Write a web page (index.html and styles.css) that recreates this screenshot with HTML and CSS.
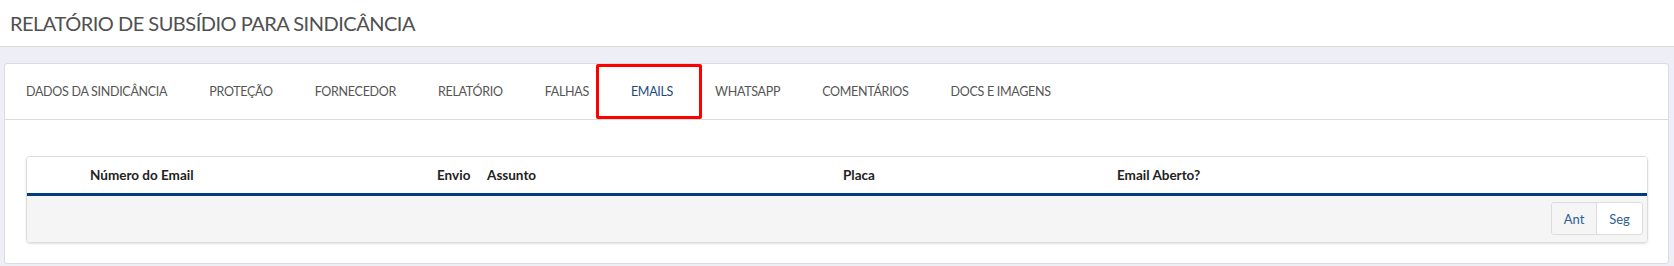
FILE: index.html
```html
<!DOCTYPE html>
<html>
  <head>
    <meta charset="utf-8" />
    <title>Relatório de Subsídio para Sindicância</title>
    <link rel="stylesheet" href="styles.css">
  </head>
  <body>
    <div class="page-header">
      <h1 class="page-title">RELATÓRIO DE SUBSÍDIO PARA SINDICÂNCIA</h1>
    </div>
    <div class="page-body">
      <div class="panel">
        <ul class="tabs">
          <li class="tab">DADOS DA SINDICÂNCIA</li>
          <li class="tab">PROTEÇÃO</li>
          <li class="tab">FORNECEDOR</li>
          <li class="tab">RELATÓRIO</li>
          <li class="tab">FALHAS</li>
          <li class="tab active">EMAILS</li>
          <li class="tab">WHATSAPP</li>
          <li class="tab">COMENTÁRIOS</li>
          <li class="tab">DOCS E IMAGENS</li>
        </ul>
        <div class="tab-content">
          <div class="grid">
            <div class="grid-head">
              <span class="col col-select"></span>
              <span class="col col-numero">Número do Email</span>
              <span class="col col-envio">Envio</span>
              <span class="col col-assunto">Assunto</span>
              <span class="col col-placa">Placa</span>
              <span class="col col-aberto">Email Aberto?</span>
            </div>
            <div class="grid-foot">
              <div class="pager">
                <button class="pager-btn disabled">Ant</button>
                <button class="pager-btn">Seg</button>
              </div>
            </div>
          </div>
        </div>
      </div>
    </div>
  </body>
</html>
```

FILE: styles.css
```css
html,
body {
  margin: 0;
  padding: 0;
}

body {
  font-family: Lato, "Open Sans", sans-serif;
  color: #555;
  background-color: #eeeef6;
}

.page-header {
  background-color: #fff;
  height: 46px;
  border-bottom: 1px solid #dcdcdc;
  padding: 0 10px;
  display: flex;
  align-items: center;
}

.page-title {
  margin: 0;
  font-size: 20px;
  font-weight: 400;
  color: #505050;
  letter-spacing: -0.5px;
}

.page-body {
  padding: 16px 5px 0 4px;
}

.panel {
  background-color: #fff;
  border: 1px solid #dcdcdc;
  border-radius: 3px;
  height: 201px;
  box-sizing: border-box;
}

.tabs {
  list-style: none;
  margin: 0;
  padding: 0 0 0 21px;
  height: 55px;
  display: flex;
  align-items: center;
  border-bottom: 1px solid #dcdcdc;
}

.tab {
  position: relative;
  font-size: 12.5px;
  letter-spacing: -0.3px;
  color: #555;
  margin-right: 42px;
  white-space: nowrap;
}

.tab.active {
  color: #1d4c7c;
}

/* marcação vermelha em volta da aba */
.tab.active::after {
  content: "";
  position: absolute;
  left: -35px;
  right: -29px;
  top: -20px;
  bottom: -20px;
  border: 3px solid #f00;
  border-radius: 2px;
}

.tab-content {
  padding: 36px 20px 0 21px;
}

.grid {
  border: 1px solid #dcdcdc;
  border-radius: 4px;
  box-shadow: 0 1px 2px rgba(0, 0, 0, 0.12);
  overflow: hidden;
}

.grid-head {
  display: flex;
  height: 36px;
  align-items: center;
  border-bottom: 3px solid #003b7c;
  background-color: #fff;
}

.col {
  font-size: 13.5px;
  font-weight: 700;
  color: #222;
  box-sizing: border-box;
  padding-left: 8px;
  white-space: nowrap;
}

.col-select { width: 55px; }
.col-numero { width: 347px; }
.col-envio { width: 50px; }
.col-assunto { width: 356px; }
.col-placa { width: 274px; }
.col-aberto { flex: 1; }

.grid-foot {
  background-color: #f5f5f5;
  height: 46px;
  display: flex;
  justify-content: flex-end;
  align-items: flex-start;
  padding: 6px 4px 0 0;
  box-sizing: border-box;
}

.pager {
  display: flex;
  border: 1px solid #dcdcdc;
  border-radius: 3px;
  overflow: hidden;
}

.pager-btn {
  font-family: Lato, "Open Sans", sans-serif;
  font-size: 13px;
  color: #2c5f93;
  background-color: #fff;
  border: 0;
  width: 45px;
  height: 31px;
  padding: 0;
}

.pager-btn.disabled {
  background-color: #f5f5f5;
  border-right: 1px solid #dcdcdc;
}
```
